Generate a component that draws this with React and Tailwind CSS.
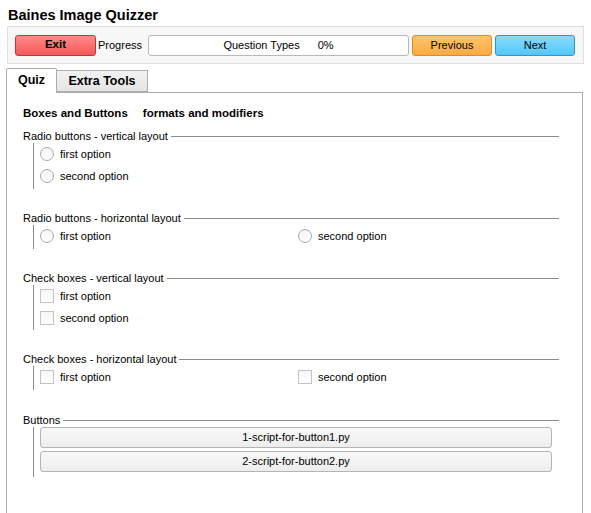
import React from 'react';

const font = { fontFamily: '"Liberation Sans", Arial, sans-serif' };

const Radio = () => (
    <span className="w-[14px] h-[14px] rounded-full border border-[#a8a8a8] bg-gradient-to-b from-[#f4f4f4] to-white shrink-0" />
);

const Check = () => (
    <span className="w-[14px] h-[14px] border border-[#c4c4c4] bg-gradient-to-b from-[#f6f6f6] to-white shrink-0" />
);

const Option = ({ kind, label }) => (
    <div className="flex items-center h-[22px] gap-[6px]">
        {kind === 'radio' ? <Radio /> : <Check />}
        <span className="text-[11px] text-black">{label}</span>
    </div>
);

const Group = ({ title, children, pb = 'pb-[2px]', mb = 'mb-[23px]' }) => (
    <div className={mb}>
        <div className="flex items-center h-[13px] gap-[3px]">
            <span className="text-[11px] leading-[13px] text-black whitespace-nowrap">{title}</span>
            <div className="flex-1 h-px bg-[#8c8c8c] mr-[23px]" />
        </div>
        <div className={`ml-[10px] border-l border-[#8c8c8c] pl-[6px] ${pb}`}>{children}</div>
    </div>
);

const ScriptButton = ({ label }) => (
    <button className="w-[512px] h-[21px] rounded-[3px] border border-[#b4b4b4] bg-gradient-to-b from-[#f8f8f8] to-[#ededed] text-[11px] text-black flex items-center justify-center">
        {label}
    </button>
);

export default function App() {
    return (
        <div style={font} className="w-[591px] h-[513px] bg-white overflow-hidden text-black relative">
            {/* Title */}
            <div className="pl-[8px] pt-[6px] h-[26px] text-[14.5px] font-bold leading-[18px]">Baines Image Quizzer</div>

            {/* Toolbar */}
            <div className="ml-[7px] w-[577px] h-[38px] border border-[#e0e0e0] bg-[#f7f7f7] flex items-center pl-[7px]">
                <button className="w-[81px] h-[21px] rounded-[3px] border border-[#c8303a] bg-gradient-to-b from-[#ff8a8a] to-[#f25858] text-[11.5px] font-bold flex items-center justify-center">
                    Exit
                </button>
                <span className="ml-[2px] w-[50px] text-[11px]">Progress</span>
                <div className="w-[261px] h-[21px] rounded-[3px] border border-[#b8b8b8] bg-white flex items-center justify-center gap-[18px] text-[11px]">
                    <span>Question Types</span>
                    <span>0%</span>
                </div>
                <button className="ml-[3px] w-[80px] h-[21px] rounded-[3px] border border-[#dc8c24] bg-gradient-to-b from-[#ffc468] to-[#f9aa44] text-[11px] flex items-center justify-center">
                    Previous
                </button>
                <button className="ml-[3px] w-[80px] h-[21px] rounded-[3px] border border-[#2a98cc] bg-gradient-to-b from-[#86ddff] to-[#52c6f6] text-[11px] flex items-center justify-center">
                    Next
                </button>
            </div>

            {/* Tabs */}
            <div className="mt-[3px] ml-[6px] flex items-end h-[25px]">
                <div className="relative z-10 w-[51px] h-[25px] border border-b-0 border-[#acacac] bg-white rounded-t-[2px] text-[12.5px] font-bold flex items-center justify-center -mb-px pb-[1px]">
                    Quiz
                </div>
                <div className="w-[91px] h-[22px] border border-l-0 border-[#acacac] bg-gradient-to-b from-[#f2f2f2] to-[#e4e4e4] text-[12.5px] font-bold flex items-center justify-center">
                    Extra Tools
                </div>
            </div>

            {/* Panel */}
            <div className="ml-[6px] w-[577px] h-[440px] border border-[#acacac] bg-white pl-[16px] pt-[13px]">
                <div className="flex items-center h-[16px] text-[11.5px] font-bold gap-[15px]">
                    <span>Boxes and Buttons</span>
                    <span>formats and modifiers</span>
                </div>

                <div className="mt-[8px]">
                    <Group title="Radio buttons - vertical layout">
                        <Option kind="radio" label="first option" />
                        <Option kind="radio" label="second option" />
                    </Group>

                    <Group title="Radio buttons - horizontal layout" pb="pb-[2px]" mb="mb-[23px]">
                        <div className="flex">
                            <div className="w-[258px]"><Option kind="radio" label="first option" /></div>
                            <Option kind="radio" label="second option" />
                        </div>
                    </Group>

                    <Group title="Check boxes - vertical layout" pb="pb-[1px]">
                        <Option kind="check" label="first option" />
                        <Option kind="check" label="second option" />
                    </Group>

                    <Group title="Check boxes - horizontal layout" pb="pb-[2px]" mb="mb-[24px]">
                        <div className="flex">
                            <div className="w-[258px]"><Option kind="check" label="first option" /></div>
                            <Option kind="check" label="second option" />
                        </div>
                    </Group>

                    <Group title="Buttons" pb="pb-[5px]" mb="mb-0">
                        <div className="flex flex-col gap-[3px]">
                            <ScriptButton label="1-script-for-button1.py" />
                            <ScriptButton label="2-script-for-button2.py" />
                        </div>
                    </Group>
                </div>
            </div>
        </div>
    );
}
